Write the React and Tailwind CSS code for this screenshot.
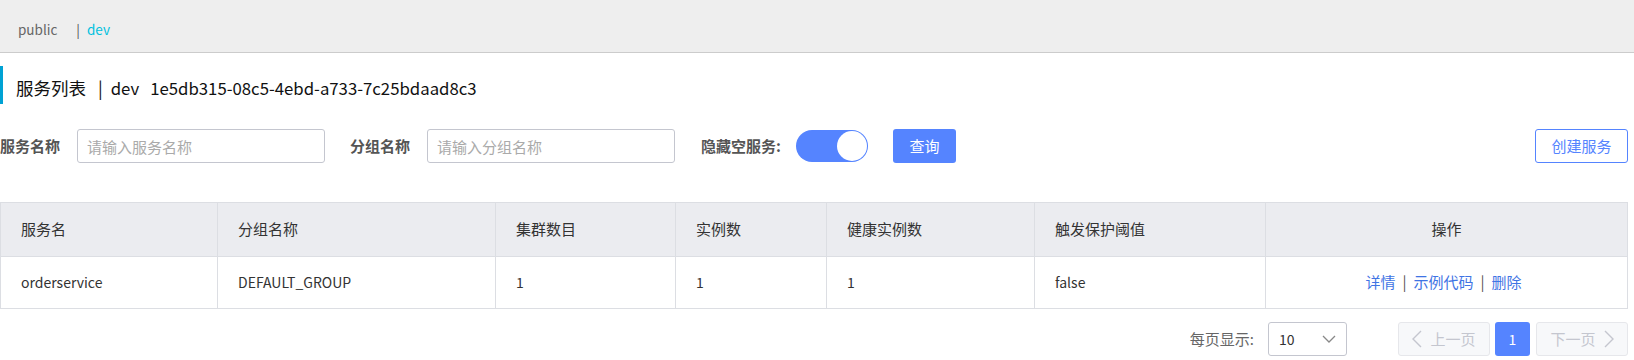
import React from 'react'

const cols = 'grid grid-cols-[217px_278px_180px_151px_208px_231px_1fr]'

function Cell({ children, center, last, latin }) {
  return (
    <div
      className={`flex items-center px-[20px] text-[#333] ${last ? '' : 'border-r border-[#dcdee3]'} ${
        center ? 'justify-center' : ''
      } ${latin ? 'text-[14px]' : ''}`}
    >
      {children}
    </div>
  )
}

function ChevronLeft() {
  return (
    <svg width="10" height="18" viewBox="0 0 10 18" fill="none" stroke="currentColor" strokeWidth="1.4">
      <path d="M9 1 L1 9 L9 17" />
    </svg>
  )
}

function ChevronRight() {
  return (
    <svg width="10" height="18" viewBox="0 0 10 18" fill="none" stroke="currentColor" strokeWidth="1.4">
      <path d="M1 1 L9 9 L1 17" />
    </svg>
  )
}

export default function App() {
  const headers = ['服务名', '分组名称', '集群数目', '实例数', '健康实例数', '触发保护阈值']
  const row = ['orderservice', 'DEFAULT_GROUP', '1', '1', '1', 'false']

  return (
    <div className="w-[1634px] h-[360px] overflow-hidden bg-white font-['Noto_Sans_CJK_SC',sans-serif] text-[15px] text-[#333]">
      {/* namespace bar */}
      <div className="h-[53px] bg-[#eeeeee] border-b border-[#cccccc] flex items-center pt-[6px] pl-[18px] text-[13.5px]">
        <span className="text-[#666]">public</span>
        <span className="ml-[19px] text-[#555]">|</span>
        <span className="ml-[7px] text-[#00c1de]">dev</span>
      </div>

      <div className="pr-[6px]">
        {/* title */}
        <div className="mt-[13px] h-[38px] border-l-[3px] border-[#00a2d4] pl-[13px] pt-[10px]">
          <div className="flex items-center h-[24px] text-[17.5px] text-[#111] leading-none">
            <span>服务列表</span>
            <span className="ml-[12px] mr-[8px]">|</span>
            <span className="text-[16.75px]">dev</span>
            <span className="ml-[11px] text-[16.75px]">1e5db315-08c5-4ebd-a733-7c25bdaad8c3</span>
          </div>
        </div>

        {/* filters */}
        <div className="mt-[25px] h-[34px] flex items-center">
          <span className="font-bold text-[#555] whitespace-nowrap">服务名称</span>
          <input
            className="ml-[17px] w-[248px] h-[34px] border border-[#c4c6cf] rounded-[3px] px-[9px] outline-none placeholder:text-[#aaa]"
            placeholder="请输入服务名称"
          />
          <span className="ml-[25px] font-bold text-[#555] whitespace-nowrap">分组名称</span>
          <input
            className="ml-[17px] w-[248px] h-[34px] border border-[#c4c6cf] rounded-[3px] px-[9px] outline-none placeholder:text-[#aaa]"
            placeholder="请输入分组名称"
          />
          <span className="ml-[26px] font-bold text-[#555] whitespace-nowrap">隐藏空服务:</span>
          <div className="ml-[15px] w-[72px] h-[32px] rounded-full bg-[#5584ff] flex items-center justify-end p-[1px]">
            <div className="w-[30px] h-[30px] rounded-full bg-white" />
          </div>
          <button className="ml-[25px] w-[63px] h-[34px] rounded-[3px] bg-[#5584ff] text-white">查询</button>
          <button className="ml-auto w-[93px] h-[34px] rounded-[3px] border border-[#5584ff] text-[#5584ff] bg-white">
            创建服务
          </button>
        </div>

        {/* table */}
        <div className="mt-[39px] border border-[#dcdee3]">
          <div className={`${cols} h-[54px] bg-[#ebecf0] border-b border-[#dcdee3]`}>
            {headers.map((h) => (
              <Cell key={h}>{h}</Cell>
            ))}
            <Cell center last>
              操作
            </Cell>
          </div>
          <div className={`${cols} h-[51px]`}>
            {row.map((v, i) => (
              <Cell key={i} latin>
                {v}
              </Cell>
            ))}
            <Cell center last>
              <div className="flex items-center mr-[6px]">
                <span className="text-[#3f74e4]">详情</span>
                <span className="mx-[7px] text-[#555]">|</span>
                <span className="text-[#3f74e4]">示例代码</span>
                <span className="mx-[7px] text-[#555]">|</span>
                <span className="text-[#3f74e4]">删除</span>
              </div>
            </Cell>
          </div>
        </div>

        {/* pagination */}
        <div className="mt-[13px] h-[34px] flex items-center justify-end">
          <span className="text-[#666]">每页显示:</span>
          <div className="ml-[14px] w-[79px] h-[34px] border border-[#c4c6cf] rounded-[3px] flex items-center justify-between pl-[10px] pr-[10px]">
            <span className="text-[#333] text-[14px]">10</span>
            <svg width="14" height="8" viewBox="0 0 14 8" fill="none" stroke="#888" strokeWidth="1.3">
              <path d="M1 1 L7 7 L13 1" />
            </svg>
          </div>
          <div className="ml-[51px] w-[92px] h-[34px] bg-[#f7f8fa] border border-[#e6e7eb] rounded-[3px] flex items-center justify-center gap-[8px] text-[#c4c6cf]">
            <ChevronLeft />
            <span>上一页</span>
          </div>
          <div className="ml-[5px] w-[35px] h-[34px] bg-[#5584ff] rounded-[3px] flex items-center justify-center text-white text-[14px]">
            1
          </div>
          <div className="ml-[6px] w-[92px] h-[34px] bg-[#f7f8fa] border border-[#e6e7eb] rounded-[3px] flex items-center justify-center gap-[8px] text-[#c4c6cf]">
            <span>下一页</span>
            <ChevronRight />
          </div>
        </div>
      </div>
    </div>
  )
}
